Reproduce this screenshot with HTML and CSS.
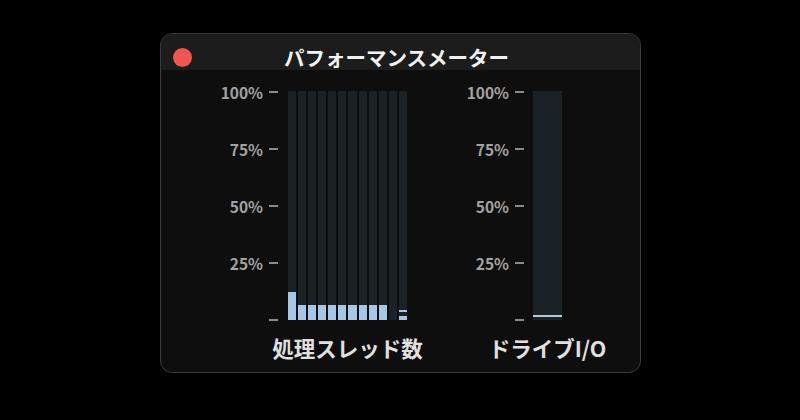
FILE: index.html
```html
<!DOCTYPE html>
<html lang="ja">
<head>
<meta charset="utf-8">
<link rel="stylesheet" href="styles.css">
</head>
<body>
<div class="window">
  <div class="titlebar">
    <div class="dot-cell"><span class="dot"></span></div>
    <div class="title">パフォーマンスメーター</div>
    <div></div>
  </div>
  <div class="content">
    <div class="chart chart-threads">
      <div class="axis">
        <div class="row"><span class="lbl">100%</span><span class="tick"></span></div>
        <div class="row"><span class="lbl">75%</span><span class="tick"></span></div>
        <div class="row"><span class="lbl">50%</span><span class="tick"></span></div>
        <div class="row"><span class="lbl">25%</span><span class="tick"></span></div>
        <div class="row"><span class="lbl"></span><span class="tick"></span></div>
      </div>
      <div class="bars">
        <div class="bar"><div class="fill" style="height:28px"></div></div>
        <div class="bar"><div class="fill" style="height:15px"></div></div>
        <div class="bar"><div class="fill" style="height:15px"></div></div>
        <div class="bar"><div class="fill" style="height:15px"></div></div>
        <div class="bar"><div class="fill" style="height:15px"></div></div>
        <div class="bar"><div class="fill" style="height:15px"></div></div>
        <div class="bar"><div class="fill" style="height:15px"></div></div>
        <div class="bar"><div class="fill" style="height:15px"></div></div>
        <div class="bar"><div class="fill" style="height:15px"></div></div>
        <div class="bar"><div class="fill" style="height:15px"></div></div>
        <div class="bar"></div>
        <div class="bar"><div class="fill split" style="height:12px"></div></div>
      </div>
      <div class="caption">処理スレッド数</div>
    </div>
    <div class="chart chart-drive">
      <div class="axis">
        <div class="row"><span class="lbl">100%</span><span class="tick"></span></div>
        <div class="row"><span class="lbl">75%</span><span class="tick"></span></div>
        <div class="row"><span class="lbl">50%</span><span class="tick"></span></div>
        <div class="row"><span class="lbl">25%</span><span class="tick"></span></div>
        <div class="row"><span class="lbl"></span><span class="tick"></span></div>
      </div>
      <div class="bars">
        <div class="bar wide"><div class="fill line"></div></div>
      </div>
      <div class="caption">ドライブI/O</div>
    </div>
  </div>
</div>
</body>
</html>
```

FILE: styles.css
```css
html, body {
  margin: 0;
  padding: 0;
  background: #000;
}
body {
  width: 800px;
  height: 420px;
  padding-top: 33px;
  box-sizing: border-box;
  font-family: "Noto Sans CJK JP", "Noto Sans", "Liberation Sans", sans-serif;
}
.window {
  width: 481px;
  height: 340px;
  margin-left: 160px;
  box-sizing: border-box;
  border: 1px solid #3a3a3c;
  border-radius: 12px;
  background: #0e0e0e;
  overflow: hidden;
}
.titlebar {
  height: 36px;
  box-sizing: border-box;
  padding-top: 10px;
  background: #1c1c1c;
  display: grid;
  grid-template-columns: 1fr auto 1fr;
  align-items: center;
}
.dot-cell {
  display: flex;
  align-items: center;
  padding-left: 12px;
}
.dot {
  width: 19px;
  height: 19px;
  border-radius: 50%;
  background: #f0564f;
}
.title {
  color: #f2f2f2;
  font-weight: 700;
  font-size: 20.5px;
  line-height: 26px;
  margin-right: 8px;
}
.content {
  display: flex;
  padding-left: 50px;
  column-gap: 50px;
}
.chart {
  display: grid;
  grid-template-rows: 242px auto;
  column-gap: 10px;
  margin-top: 15px;
}
.chart-threads {
  grid-template-columns: 67px 119px;
}
.chart-drive {
  grid-template-columns: 67px 29px;
  column-gap: 9px;
}
.axis {
  display: flex;
  flex-direction: column;
  justify-content: space-between;
}
.row {
  height: 14px;
  display: flex;
  align-items: center;
  justify-content: flex-end;
}
.lbl {
  color: #a2a2a2;
  font-weight: 700;
  font-size: 15.5px;
  line-height: 14px;
}
.tick {
  width: 9px;
  height: 2px;
  margin-left: 6px;
  background: #8a8a8a;
}
.bars {
  margin-top: 6px;
  height: 229px;
  display: flex;
  column-gap: 2px;
  align-self: start;
}
.bar {
  flex: 1;
  background: #1b2226;
  display: flex;
  flex-direction: column;
  justify-content: flex-end;
}
.fill {
  background: #a7c7e7;
}
.fill.split {
  background: linear-gradient(to top, #a7c7e7 0 4px, transparent 4px 8px, #a7c7e7 8px 10px, transparent 10px);
}
.fill.line {
  height: 2px;
  margin-bottom: 3px;
  background: #b0c8dc;
}
.caption {
  grid-column: 2;
  grid-row: 2;
  display: flex;
  justify-content: center;
  white-space: nowrap;
  color: #e0e0e0;
  font-weight: 700;
  font-size: 21.5px;
  line-height: 26px;
  margin-top: 8px;
}
```
